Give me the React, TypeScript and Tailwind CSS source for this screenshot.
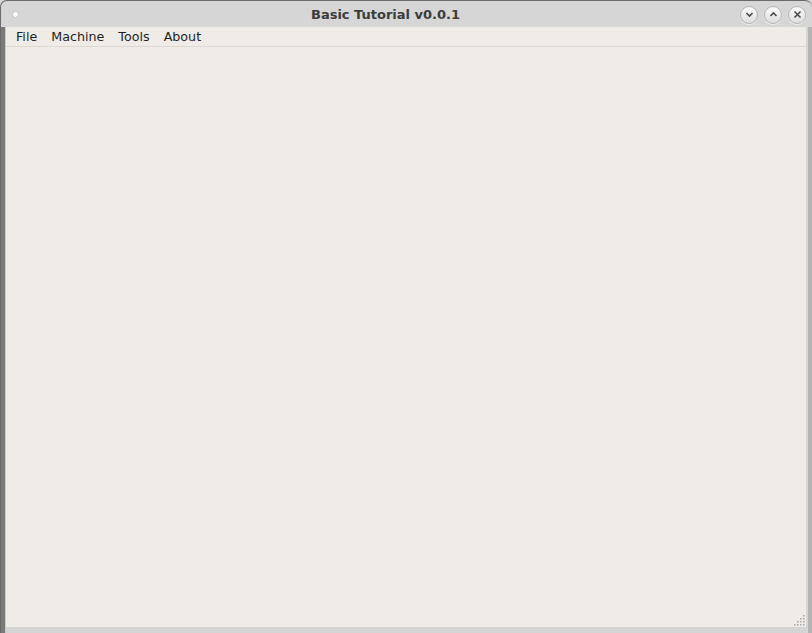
import React from "react";

function CircleBtn({ children }: { children: React.ReactNode }) {
  return (
    <div className="w-[18px] h-[18px] rounded-full border border-[#b4b4b4] bg-gradient-to-b from-[#fafafa] to-[#dedede] flex items-center justify-center shadow-[0_1px_0_rgba(255,255,255,0.6)]">
      {children}
    </div>
  );
}

export default function App() {
  const menus = ["File", "Machine", "Tools", "About"];
  return (
    <div className="w-[812px] h-[633px] bg-[#d4d4d4] flex flex-col overflow-hidden" style={{ fontFamily: '"DejaVu Sans", sans-serif' }}>
      <div className="flex-1 flex flex-col rounded-t-[7px] border-t border-l border-[#6a6a6a] bg-[#d6d6d6] overflow-hidden">
        {/* Titlebar */}
        <div className="h-[26px] flex items-center shrink-0 relative">
          <div className="ml-[11px] mt-[1px] w-[7px] h-[7px] rounded-full bg-white border border-[#c4c4c4]" />
          <div className="absolute left-0 right-[42px] top-[1px] h-[26px] flex items-center justify-center text-[13px] font-bold text-[#3c3c3c]">
            Basic Tutorial v0.0.1
          </div>
          <div className="ml-auto mr-[6px] mt-[1px] flex items-center gap-[6px]">
            <CircleBtn>
              <svg width="9" height="9" viewBox="0 0 9 9"><path d="M1.5 3 L4.5 6 L7.5 3" fill="none" stroke="#4a4a4a" strokeWidth="1.6" /></svg>
            </CircleBtn>
            <CircleBtn>
              <svg width="9" height="9" viewBox="0 0 9 9"><path d="M1.5 6 L4.5 3 L7.5 6" fill="none" stroke="#4a4a4a" strokeWidth="1.6" /></svg>
            </CircleBtn>
            <CircleBtn>
              <svg width="9" height="9" viewBox="0 0 9 9"><path d="M1.5 1.5 L7.5 7.5 M7.5 1.5 L1.5 7.5" fill="none" stroke="#4a4a4a" strokeWidth="1.6" /></svg>
            </CircleBtn>
          </div>
        </div>
        {/* Body with frame */}
        <div className="flex-1 flex min-h-0">
          <div className="w-[4px] bg-[#7a7a7a] shrink-0" />
          <div className="w-[1px] bg-[#c9c9c9] shrink-0" />
          <div className="flex-1 flex flex-col min-w-0">
            <div className="flex-1 flex flex-col bg-[#efece7] relative">
              <div className="h-[20px] flex items-center pl-[3px] border-b border-[#dcd8d2] text-[12.7px] text-[#1f1f1f] shrink-0">
                {menus.map((m) => (
                  <div key={m} className="px-[7px] leading-[20px]">{m}</div>
                ))}
              </div>
              <div className="flex-1" />
              <svg className="absolute right-[1px] bottom-[1px]" width="12" height="12" viewBox="0 0 12 12">
                {[
                  [10, 1], [10, 4], [7, 4], [10, 7], [7, 7], [4, 7], [10, 10], [7, 10], [4, 10], [1, 10],
                ].map(([x, y], i) => (
                  <rect key={i} x={x} y={y} width="1.5" height="1.5" fill="#a9a59f" />
                ))}
              </svg>
            </div>
            <div className="h-[6px] bg-[#d4d4d4] shrink-0" />
          </div>
          <div className="w-[2px] bg-[#d6d6d6] shrink-0" />
          <div className="w-[4px] bg-[#b4b4b4] shrink-0" />
        </div>
      </div>
    </div>
  );
}
